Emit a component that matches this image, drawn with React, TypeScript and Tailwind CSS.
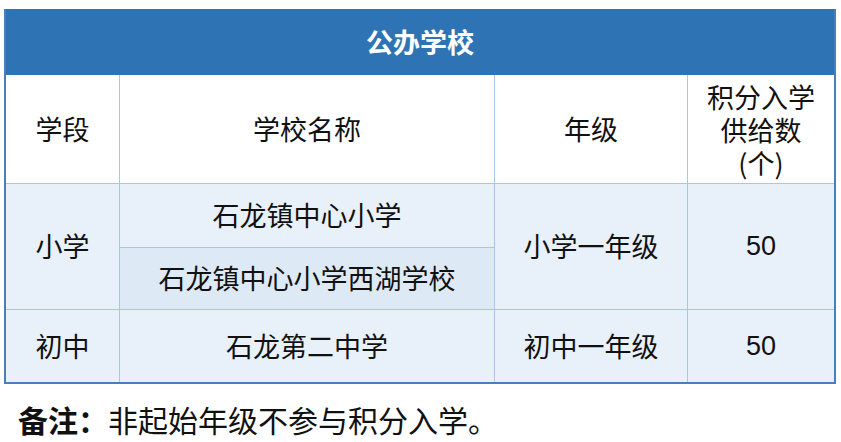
const font = { fontFamily: '"Noto Sans CJK SC", "Liberation Sans", sans-serif' };

const cell = 'flex items-center justify-center border-r border-b border-[#a9c6e8] text-center';

export default function App() {
  return (
    <div className="min-h-[442px] w-[841px] bg-white pl-[4px] pt-[9px] text-[27px] text-[#111]" style={font}>
      <div className="w-[832px] border-x-2 border-b-2 border-[#4a7ebb]">
        <div className="flex h-[66px] items-center justify-center bg-[#2e74b5] font-bold text-white">公办学校</div>
        <div className="grid grid-cols-[114px_375px_193px_146px] grid-rows-[109px_64px_62px_72px]">
          <div className={`${cell} bg-white`}>学段</div>
          <div className={`${cell} bg-white`}>学校名称</div>
          <div className={`${cell} bg-white`}>年级</div>
          <div className={`${cell} border-r-0 bg-white`}>
            <p className="leading-[33px]">
              积分入学
              <br />
              供给数
              <br />
              (个)
            </p>
          </div>

          <div className={`${cell} row-span-2 bg-[#e8f0fa]`}>小学</div>
          <div className={`${cell} bg-[#e8f0fa]`}>石龙镇中心小学</div>
          <div className={`${cell} row-span-2 bg-[#e8f0fa]`}>小学一年级</div>
          <div className={`${cell} row-span-2 border-r-0 bg-[#e8f0fa]`} style={{ fontFamily: '"Liberation Sans", sans-serif' }}>50</div>
          <div className={`${cell} bg-[#dee9f6]`}>石龙镇中心小学西湖学校</div>

          <div className={`${cell} border-b-0 bg-[#e8f0fa]`}>初中</div>
          <div className={`${cell} border-b-0 bg-[#e8f0fa]`}>石龙第二中学</div>
          <div className={`${cell} border-b-0 bg-[#e8f0fa]`}>初中一年级</div>
          <div className={`${cell} border-r-0 border-b-0 bg-[#e8f0fa]`} style={{ fontFamily: '"Liberation Sans", sans-serif' }}>50</div>
        </div>
      </div>
      <p className="mt-[19px] pl-[14px] text-[30px] leading-[32px]">
        <span className="font-bold">备注：</span>非起始年级不参与积分入学。
      </p>
    </div>
  );
}
